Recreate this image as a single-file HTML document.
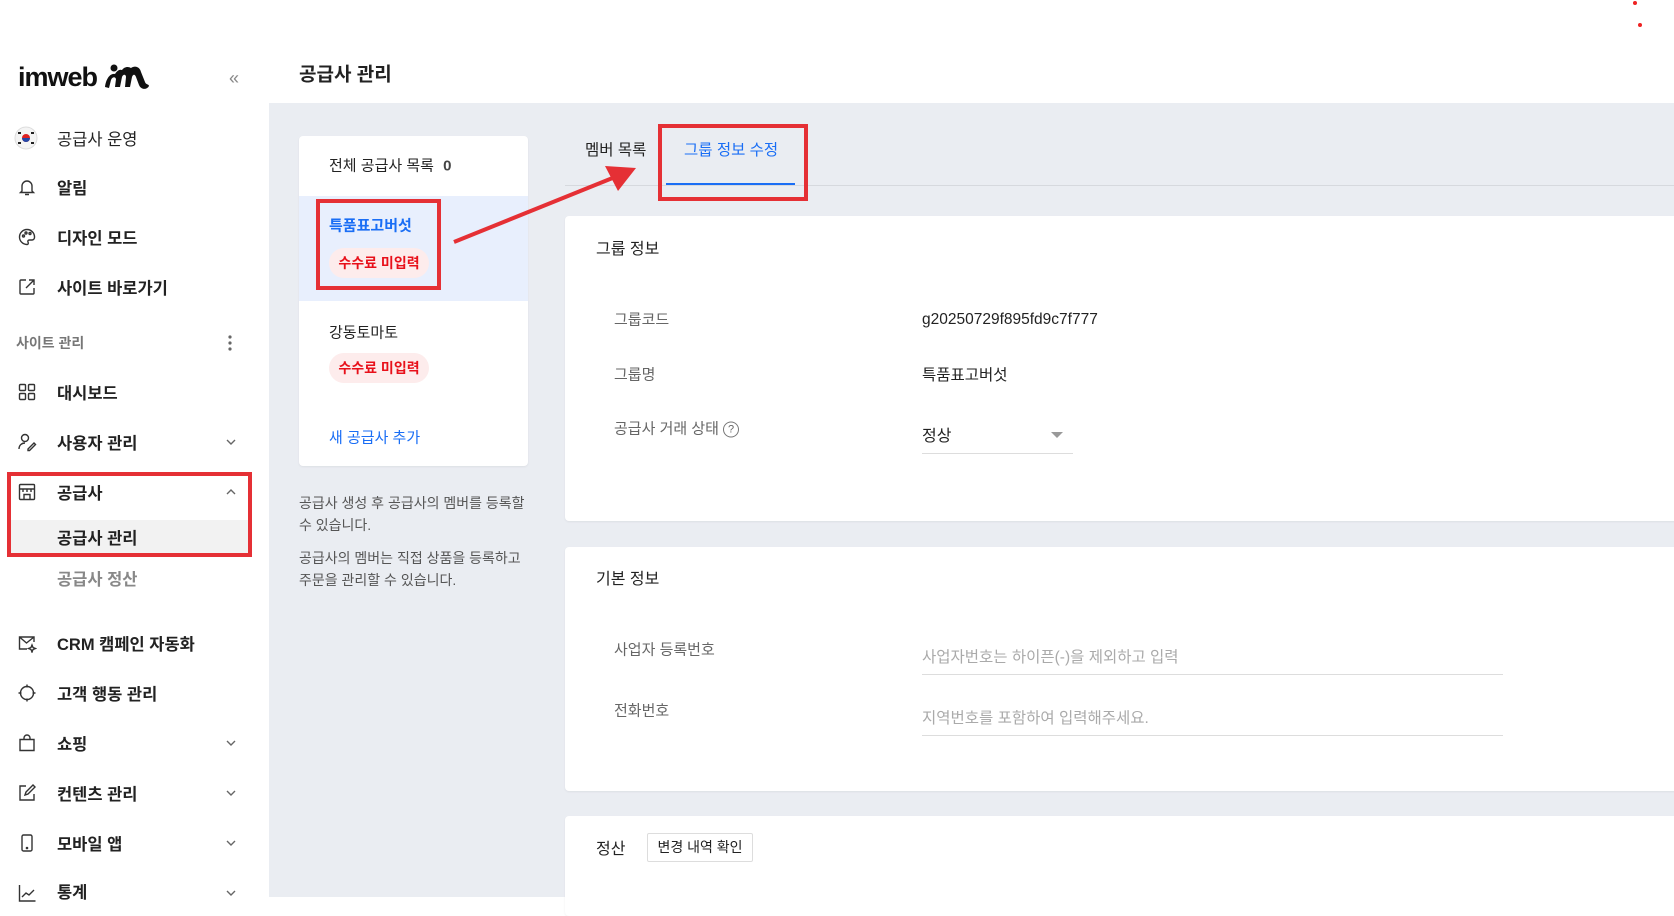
<!DOCTYPE html>
<html><head><meta charset="utf-8"><style>
*{margin:0;padding:0;box-sizing:border-box}
body{width:1674px;height:897px;overflow:hidden;background:#fff;font-family:"Liberation Sans","Noto Sans CJK KR",sans-serif;color:#222;position:relative}
.a{position:absolute;white-space:nowrap}
.side{position:absolute;left:0;top:0;width:269px;height:897px;background:#fff}
.mi{position:absolute;left:57px;font-size:16.5px;font-weight:700;color:#222;transform:translateY(-50%)}
.ic{position:absolute;left:17px;width:20px;height:20px;transform:translateY(-50%)}
.chev{position:absolute;left:225px;width:12px;height:8px;transform:translateY(-50%)}
.main{position:absolute;left:269px;top:103px;right:0;bottom:0;background:#eaedf2}
.card{position:absolute;background:#fff;border-radius:4px;box-shadow:0 1px 2px rgba(0,0,0,.06)}
.lbl{font-size:15px;color:#666;transform:translateY(-50%)}
.val{font-size:15.5px;color:#222;transform:translateY(-50%)}
.badge{position:absolute;left:329px;width:100px;height:30px;border-radius:15px;background:#fdecec;color:#e8101a;font-size:14px;font-weight:700;text-align:center;line-height:30px}
.rb{position:absolute;border:4px solid #e53035}
</style></head><body>
<div class="side">
  <div class="a" style="left:18px;top:62px;font-size:27px;font-weight:700;letter-spacing:-1px;color:#111">imweb</div>
  <svg class="a" style="left:104px;top:63px" width="46" height="28" viewBox="0 0 46 28"><circle cx="10" cy="5" r="3.5" fill="#111"/><path d="M1 24 C2 16 6 10 11 11 C13 8 15 6 18 7 C20 4 24 3 27 5 C31 2 36 4 37 9 L41 19 C42 22 45 21 45 23 C43 27 37 27 35 22 L32 14 C31 11 29 11 28 14 L26 24 L21 24 L22 14 C22 11 19 11 18 14 L16 24 L11 24 L12 16 C11 13 8 14 7 17 L5 25 Z" fill="#111"/></svg>
  <div class="a" style="left:229px;top:68px;font-size:18px;color:#888">«</div>

  <svg class="ic" style="top:138px;left:14px;width:24px;height:24px" viewBox="0 0 24 24"><circle cx="12" cy="12" r="11" fill="#f4f4f4" stroke="#ddd"/><circle cx="12" cy="12" r="4" fill="#d22"/><path d="M8 12a4 4 0 0 0 8 0" fill="#2448a8"/><g fill="#222"><rect x="4" y="6" width="3" height="2"/><rect x="17" y="6" width="3" height="2"/><rect x="4" y="16" width="3" height="2"/><rect x="17" y="16" width="3" height="2"/></g></svg>
  <div class="mi" style="top:138px;font-weight:400">공급사 운영</div>

  <svg class="ic" style="top:187px" viewBox="0 0 20 20" fill="none" stroke="#333" stroke-width="1.4"><path d="M5 14V9a5 5 0 0 1 10 0v5l1.5 1.5h-13z M8 17.5h4"/></svg>
  <div class="mi" style="top:187px">알림</div>
  <svg class="ic" style="top:237px" viewBox="0 0 20 20" fill="none" stroke="#333" stroke-width="1.4"><path d="M10 2.5a7.5 7.5 0 1 0 0 15c1.5 0 1.5-1.5 1-2.5s0-2 1.5-2H15a2.5 2.5 0 0 0 2.5-2.5A7.5 7.5 0 0 0 10 2.5z"/><circle cx="6.5" cy="9" r="1"/><circle cx="9" cy="6" r="1"/><circle cx="13" cy="6.5" r="1"/></svg>
  <div class="mi" style="top:237px">디자인 모드</div>
  <svg class="ic" style="top:287px" viewBox="0 0 20 20" fill="none" stroke="#333" stroke-width="1.4"><path d="M9 3H4a1 1 0 0 0-1 1v12a1 1 0 0 0 1 1h12a1 1 0 0 0 1-1v-5 M12 3h5v5 M17 3l-8 8"/></svg>
  <div class="mi" style="top:287px">사이트 바로가기</div>

  <div class="a" style="left:16px;top:343px;transform:translateY(-50%);font-size:14px;color:#777;font-weight:700">사이트 관리</div>
  <svg class="a" style="left:228px;top:335px" width="4" height="16"><circle cx="2" cy="2" r="1.6" fill="#666"/><circle cx="2" cy="8" r="1.6" fill="#666"/><circle cx="2" cy="14" r="1.6" fill="#666"/></svg>

  <svg class="ic" style="top:392px" viewBox="0 0 20 20" fill="none" stroke="#333" stroke-width="1.4"><rect x="2.5" y="2.5" width="6" height="6" rx="1"/><rect x="11.5" y="2.5" width="6" height="6" rx="1"/><rect x="2.5" y="11.5" width="6" height="6" rx="1"/><rect x="11.5" y="11.5" width="6" height="6" rx="1"/></svg>
  <div class="mi" style="top:392px">대시보드</div>
  <svg class="ic" style="top:442px" viewBox="0 0 20 20" fill="none" stroke="#333" stroke-width="1.4"><circle cx="8" cy="6" r="3.5"/><path d="M2 17c0-4 3-6 6-6 M11 17l6-6 1.5 1.5-6 6H11z"/></svg>
  <div class="mi" style="top:442px">사용자 관리</div>
  <svg class="chev" style="top:442px" viewBox="0 0 12 8"><path d="M2 2l4 4 4-4" fill="none" stroke="#666" stroke-width="1.4"/></svg>

  <div class="a" style="left:10px;top:520px;width:238px;height:34px;background:#f2f2f2"></div>
  <svg class="ic" style="top:492px" viewBox="0 0 20 20" fill="none" stroke="#333" stroke-width="1.4"><rect x="2.5" y="2.5" width="15" height="15" rx="1"/><path d="M2.5 7h15 M6 7v3 M10 7v3 M14 7v3 M7 17.5v-5h6v5"/></svg>
  <div class="mi" style="top:492px">공급사</div>
  <svg class="chev" style="top:492px" viewBox="0 0 12 8"><path d="M2 6l4-4 4 4" fill="none" stroke="#666" stroke-width="1.4"/></svg>
  <div class="mi" style="top:537px">공급사 관리</div>
  <div class="mi" style="top:578px;color:#888">공급사 정산</div>
  <div class="rb" style="left:7px;top:472px;width:245px;height:85px"></div>

  <svg class="ic" style="top:643px" viewBox="0 0 20 20" fill="none" stroke="#333" stroke-width="1.4"><path d="M17 9V4H2.5v12H10 M2.5 4l7 6 7.5-6"/><path d="M15 12l1 2.5 2.5 1-2.5 1-1 2.5-1-2.5-2.5-1 2.5-1z"/></svg>
  <div class="mi" style="top:643px">CRM 캠페인 자동화</div>
  <svg class="ic" style="top:693px" viewBox="0 0 20 20" fill="none" stroke="#333" stroke-width="1.4"><circle cx="10" cy="10" r="6.5"/><path d="M10 1.5v3 M10 15.5v3 M1.5 10h3 M15.5 10h3"/></svg>
  <div class="mi" style="top:693px">고객 행동 관리</div>
  <svg class="ic" style="top:743px" viewBox="0 0 20 20" fill="none" stroke="#333" stroke-width="1.4"><path d="M3 6.5h14v11H3z M7 6.5V5a3 3 0 0 1 6 0v1.5"/></svg>
  <div class="mi" style="top:743px">쇼핑</div>
  <svg class="chev" style="top:743px" viewBox="0 0 12 8"><path d="M2 2l4 4 4-4" fill="none" stroke="#666" stroke-width="1.4"/></svg>
  <svg class="ic" style="top:793px" viewBox="0 0 20 20" fill="none" stroke="#333" stroke-width="1.4"><path d="M9 3H3v14h14v-6 M8 12l1-3 7-7 2 2-7 7z"/></svg>
  <div class="mi" style="top:793px">컨텐츠 관리</div>
  <svg class="chev" style="top:793px" viewBox="0 0 12 8"><path d="M2 2l4 4 4-4" fill="none" stroke="#666" stroke-width="1.4"/></svg>
  <svg class="ic" style="top:843px" viewBox="0 0 20 20" fill="none" stroke="#333" stroke-width="1.4"><rect x="5" y="2" width="10" height="16" rx="1.5"/><circle cx="10" cy="15" r=".6" fill="#333"/></svg>
  <div class="mi" style="top:843px">모바일 앱</div>
  <svg class="chev" style="top:843px" viewBox="0 0 12 8"><path d="M2 2l4 4 4-4" fill="none" stroke="#666" stroke-width="1.4"/></svg>
  <svg class="ic" style="top:893px" viewBox="0 0 20 20" fill="none" stroke="#333" stroke-width="1.4"><path d="M2.5 2v16h16 M5 14l4-4 3 2 5-5"/></svg>
  <div class="mi" style="top:891px">통계</div>
  <svg class="chev" style="top:893px" viewBox="0 0 12 8"><path d="M2 2l4 4 4-4" fill="none" stroke="#666" stroke-width="1.4"/></svg>
</div>

<div class="a" style="left:269px;top:50px;width:1405px;height:53px;background:#fff"></div>
<div class="a" style="left:299px;top:73px;transform:translateY(-50%);font-size:19px;font-weight:700;color:#222">공급사 관리</div>
<div class="a" style="left:1633px;top:1px;width:4px;height:4px;border-radius:2px;background:#e22"></div>
<div class="a" style="left:1638px;top:23px;width:4px;height:4px;border-radius:2px;background:#e22"></div>

<div class="main"></div>

<div class="card" style="left:299px;top:136px;width:229px;height:330px;overflow:hidden">
  <div class="a" style="left:0;top:60px;width:229px;height:105px;background:#e8effd"></div>
</div>
<div class="a" style="left:329px;top:165px;transform:translateY(-50%);font-size:15px">전체 공급사 목록 <b style="margin-left:5px;color:#444">0</b></div>
<div class="a" style="left:329px;top:225px;transform:translateY(-50%);font-size:15px;font-weight:700;color:#1a6ef5">특품표고버섯</div>
<div class="badge" style="top:248px">수수료 미입력</div>
<div class="rb" style="left:316px;top:199px;width:125px;height:91px"></div>
<div class="a" style="left:329px;top:332px;transform:translateY(-50%);font-size:15px">강동토마토</div>
<div class="badge" style="top:353px">수수료 미입력</div>
<div class="a" style="left:329px;top:437px;transform:translateY(-50%);font-size:15px;color:#1a6ef5">새 공급사 추가</div>
<div class="a" style="left:299px;top:492px;font-size:14px;line-height:22px;color:#555">공급사 생성 후 공급사의 멤버를 등록할<br>수 있습니다.</div>
<div class="a" style="left:299px;top:547px;font-size:14px;line-height:22px;color:#555">공급사의 멤버는 직접 상품을 등록하고<br>주문을 관리할 수 있습니다.</div>

<div class="a" style="left:565px;top:185px;width:1109px;height:1px;background:#d6d9de"></div>
<div class="a" style="left:585px;top:149px;transform:translateY(-50%);font-size:15.5px;color:#222">멤버 목록</div>
<div class="a" style="left:684px;top:149px;transform:translateY(-50%);font-size:15.5px;color:#1a6ef5">그룹 정보 수정</div>
<div class="a" style="left:666px;top:183px;width:129px;height:2px;background:#1a6ef5"></div>
<div class="rb" style="left:658px;top:124px;width:150px;height:77px"></div>
<svg class="a" style="left:440px;top:155px" width="210" height="100"><line x1="14" y1="87" x2="180" y2="20" stroke="#e53035" stroke-width="4"/><path d="M196 13 L165 11 L178 36 Z" fill="#e53035"/></svg>

<div class="card" style="left:565px;top:216px;width:1120px;height:305px"></div>
<div class="a" style="left:596px;top:247px;transform:translateY(-50%);font-size:16px">그룹 정보</div>
<div class="a lbl" style="left:614px;top:319px">그룹코드</div>
<div class="a val" style="left:922px;top:320px">g20250729f895fd9c7f777</div>
<div class="a lbl" style="left:614px;top:374px">그룹명</div>
<div class="a val" style="left:922px;top:374px">특품표고버섯</div>
<div class="a lbl" style="left:614px;top:428px">공급사 거래 상태 <span style="display:inline-block;width:16px;height:16px;border:1.3px solid #777;border-radius:50%;font-size:11px;line-height:14px;text-align:center;vertical-align:middle">?</span></div>
<div class="a val" style="left:922px;top:434px;font-size:16px">정상</div>
<div class="a" style="left:1051px;top:432px;border-left:6px solid transparent;border-right:6px solid transparent;border-top:6px solid #999"></div>
<div class="a" style="left:922px;top:453px;width:151px;height:1px;background:#ddd"></div>

<div class="card" style="left:565px;top:547px;width:1120px;height:244px"></div>
<div class="a" style="left:596px;top:577px;transform:translateY(-50%);font-size:16px">기본 정보</div>
<div class="a lbl" style="left:614px;top:649px">사업자 등록번호</div>
<div class="a val" style="left:922px;top:656px;color:#aaa">사업자번호는 하이픈(-)을 제외하고 입력</div>
<div class="a" style="left:922px;top:674px;width:581px;height:1px;background:#ddd"></div>
<div class="a lbl" style="left:614px;top:710px">전화번호</div>
<div class="a val" style="left:922px;top:717px;color:#aaa">지역번호를 포함하여 입력해주세요.</div>
<div class="a" style="left:922px;top:735px;width:581px;height:1px;background:#ddd"></div>

<div class="card" style="left:565px;top:816px;width:1120px;height:100px"></div>
<div class="a" style="left:596px;top:847px;transform:translateY(-50%);font-size:16px">정산</div>
<div class="a" style="left:647px;top:833px;width:106px;height:29px;border:1px solid #ddd;border-radius:2px;font-size:14px;line-height:27px;text-align:center">변경 내역 확인</div>
</body></html>
